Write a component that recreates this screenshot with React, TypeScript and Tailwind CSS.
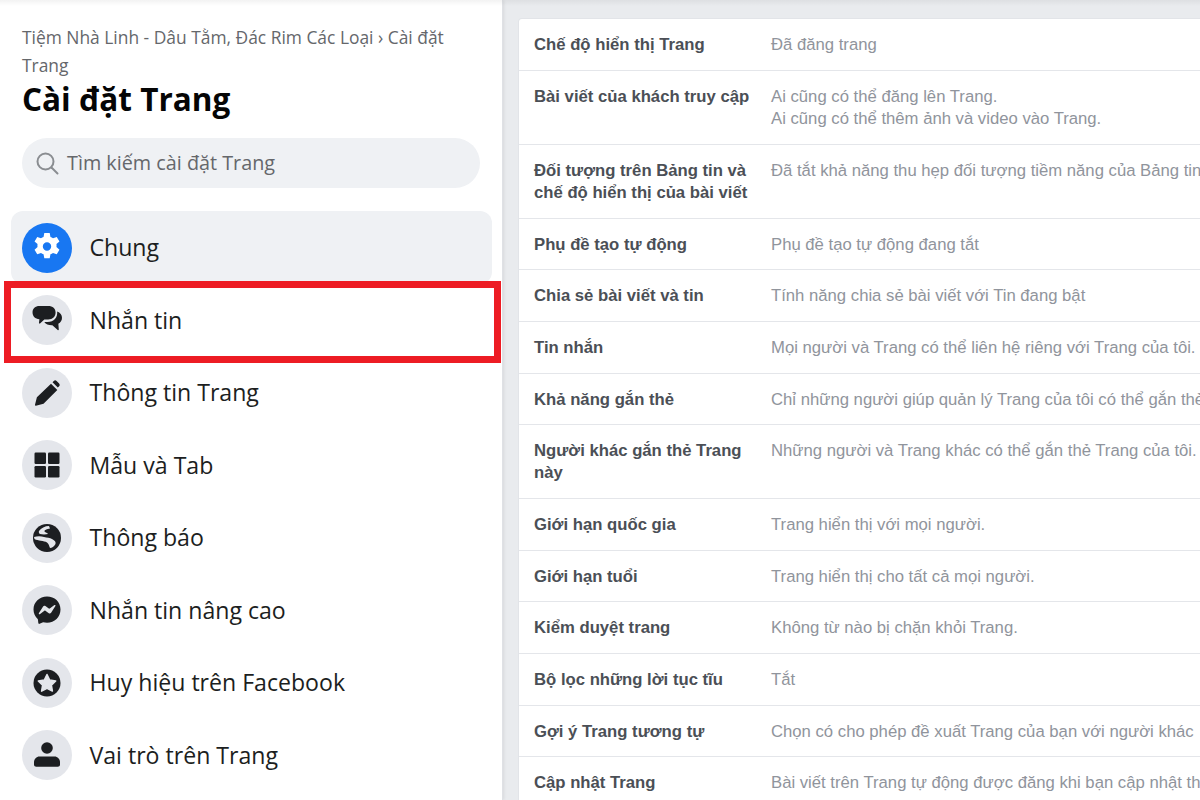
const rows: { label: string[]; value: string[] }[] = [
  { label: ["Chế độ hiển thị Trang"], value: ["Đã đăng trang"] },
  { label: ["Bài viết của khách truy cập"], value: ["Ai cũng có thể đăng lên Trang.", "Ai cũng có thể thêm ảnh và video vào Trang."] },
  { label: ["Đối tượng trên Bảng tin và", "chế độ hiển thị của bài viết"], value: ["Đã tắt khả năng thu hẹp đối tượng tiềm năng của Bảng tin"] },
  { label: ["Phụ đề tạo tự động"], value: ["Phụ đề tạo tự động đang tắt"] },
  { label: ["Chia sẻ bài viết và tin"], value: ["Tính năng chia sẻ bài viết với Tin đang bật"] },
  { label: ["Tin nhắn"], value: ["Mọi người và Trang có thể liên hệ riêng với Trang của tôi."] },
  { label: ["Khả năng gắn thẻ"], value: ["Chỉ những người giúp quản lý Trang của tôi có thể gắn thẻ"] },
  { label: ["Người khác gắn thẻ Trang", "này"], value: ["Những người và Trang khác có thể gắn thẻ Trang của tôi."] },
  { label: ["Giới hạn quốc gia"], value: ["Trang hiển thị với mọi người."] },
  { label: ["Giới hạn tuổi"], value: ["Trang hiển thị cho tất cả mọi người."] },
  { label: ["Kiểm duyệt trang"], value: ["Không từ nào bị chặn khỏi Trang."] },
  { label: ["Bộ lọc những lời tục tĩu"], value: ["Tắt"] },
  { label: ["Gợi ý Trang tương tự"], value: ["Chọn có cho phép đề xuất Trang của bạn với người khác"] },
  { label: ["Cập nhật Trang"], value: ["Bài viết trên Trang tự động được đăng khi bạn cập nhật thông"] },
];

const GearIcon = () => (
  <svg viewBox="2 3 20 20" className="h-[30px] w-[30px] fill-white">
    <path
      fillRule="evenodd"
      d="M10.200 2h3.600l.5 2.600c.6.2 1.200.5 1.700.9l2.500-.9 1.800 3.100-2 1.700c.1.7.1 1.300 0 2l2 1.700-1.800 3.100-2.500-.9c-.5.4-1.100.7-1.700.9l-.5 2.600h-3.600l-.5-2.600c-.6-.2-1.200-.5-1.700-.9l-2.500.9-1.800-3.100 2-1.700c-.1-.7-.1-1.300 0-2l-2-1.700 1.800-3.100 2.500.9c.5-.4 1.100-.7 1.700-.9zM12 8.200a2.800 2.800 0 1 0 0 5.600 2.800 2.800 0 0 0 0-5.600z"
      transform="translate(0 1)"
    />
  </svg>
);

const ChatIcon = () => (
  <svg viewBox="1 2 28 27" className="h-[30px] w-[30px] fill-[#1c1e21]">
    <path d="M8 2.500h8c4.500 0 7 2.400 7 6 0 3.800-2.600 6.500-7 6.500h-3.500l-4 3.700c-.5.400-1.100.1-1-.5l.4-3.300C4 14.400 1.500 12 1.500 8.500c0-3.600 2.500-6 6.500-6z" />
    <path d="M24.500 7.500c2.800 1 4.500 3.300 4.500 6 0 2.600-1.300 4.500-3.400 5.500l.4 5.300c0 .6-.6.900-1 .5l-5-4.500c-3.500.1-6-.8-7.500-3h3c6 0 9.500-4 9-9.800z" />
  </svg>
);

const PencilIcon = () => (
  <svg viewBox="0 0 30 30" className="h-[30px] w-[30px] fill-[#1c1e21]">
    <path d="M20.500 4.200l1.300-1.300c.8-.8 2-.8 2.800 0l2.500 2.500c.8.800.8 2 0 2.800l-1.300 1.300zM19 5.700l6.300 6.300-13.800 13.800-7.600 1.900c-.6.100-1-.3-.9-.9l1.900-7.600z" />
  </svg>
);

const GridIcon = () => (
  <svg viewBox="0 0 30 30" className="h-[30px] w-[30px] fill-[#1c1e21]">
    <rect x="2.500" y="2.500" width="11.500" height="11.500" rx="1.200" />
    <rect x="16" y="2.500" width="11.500" height="11.500" rx="1.200" />
    <rect x="2.500" y="16" width="11.500" height="11.500" rx="1.200" />
    <rect x="16" y="16" width="11.500" height="11.500" rx="1.200" />
  </svg>
);

const GlobeIcon = () => (
  <svg viewBox="0 0 30 30" className="h-[30px] w-[30px]">
    <circle cx="15" cy="15" r="14" className="fill-[#1c1e21]" />
    <path
      className="fill-[#e4e6eb]"
      d="M7 8c2-3 6-5 10-5l1 2.500c-3 .5-6 1.500-5.500 3 1 1.500 3 1 3.500 2.500-2 .5-6 .5-8 0-1-.5-1.500-2-1-3z"
    />
    <path
      className="fill-[#e4e6eb]"
      d="M2 14c3-1 7-1 10 0 3 1 6 .5 8 2 3 1.500 4 3 3.500 5-1.500 2.500-3.500 4-5.500 4-1-2-1-4-3-5.500-3-2-9-1.500-12.500-3.500z"
    />
  </svg>
);

const MessengerIcon = () => (
  <svg viewBox="0 0 30 30" className="h-[30px] w-[30px]">
    <path className="fill-[#1c1e21]" d="M15 1.500C7.400 1.500 1.500 7.100 1.500 14.500c0 3.900 1.600 7.200 4.200 9.500.5.400.4 3.500.7 4.300.2.500.7.700 1.200.5l3.500-1.500c1.200.3 2.500.5 3.900.5 7.600 0 13.500-5.600 13.500-13.300S22.600 1.500 15 1.500z" />
    <path className="fill-[#e4e6eb]" d="M6.800 18.300l4.300-6.800c.5-.8 1.600-1 2.300-.4l3.400 2.500c.3.200.7.200 1 0l4.600-3.500c.6-.5 1.400.3 1 .9l-4.300 6.800c-.5.800-1.600 1-2.300.4l-3.400-2.500c-.3-.2-.7-.2-1 0l-4.600 3.500c-.6.500-1.400-.3-.8-.9z" />
  </svg>
);

const BadgeIcon = () => (
  <svg viewBox="0 0 30 30" className="h-[30px] w-[30px]">
    <circle cx="15" cy="15" r="13.500" className="fill-[#1c1e21]" />
    <path className="fill-[#e4e6eb]" d="M15 6.500l2.700 5.500 6 .9-4.300 4.200 1 6-5.400-2.800-5.400 2.800 1-6-4.300-4.200 6-.9z" stroke="#e4e6eb" strokeWidth="1.500" strokeLinejoin="round" />
  </svg>
);

const PersonIcon = () => (
  <svg viewBox="0 0 30 30" className="h-[30px] w-[30px] fill-[#1c1e21]">
    <circle cx="15" cy="8" r="5.800" />
    <path d="M7.500 16.500h15c3 0 5.500 2.500 5.500 5.500v2.500c0 1.300-1 2.300-2.300 2.300H4.300c-1.300 0-2.300-1-2.300-2.300V22c0-3 2.500-5.500 5.500-5.500z" />
  </svg>
);

const navItems = [
  { label: "Chung", icon: <GearIcon />, active: true },
  { label: "Nhắn tin", icon: <ChatIcon /> },
  { label: "Thông tin Trang", icon: <PencilIcon /> },
  { label: "Mẫu và Tab", icon: <GridIcon /> },
  { label: "Thông báo", icon: <GlobeIcon /> },
  { label: "Nhắn tin nâng cao", icon: <MessengerIcon /> },
  { label: "Huy hiệu trên Facebook", icon: <BadgeIcon /> },
  { label: "Vai trò trên Trang", icon: <PersonIcon /> },
];

export default function App() {
  return (
    <div className="relative flex h-[800px] w-[1200px] overflow-hidden bg-[#e9ebee] font-['Open_Sans','Liberation_Sans',sans-serif]">
      {/* Sidebar */}
      <aside className="w-[503px] shrink-0 border-r border-[#dfe1e5] bg-white shadow-[1px_0_3px_rgba(0,0,0,0.08)]">
        <div className="px-[22px] pt-[23px]">
          <div className="w-[440px] text-[17.400px] leading-[28px] text-[#65676b]">
            Tiệm Nhà Linh - Dâu Tằm, Đác Rim Các Loại › Cài đặt Trang
          </div>
          <h1 className="mt-[-2px] text-[31.500px] leading-[44px] font-bold text-[#050505]">Cài đặt Trang</h1>
          <div className="mt-[17px] flex h-[50px] w-[458px] items-center gap-[8px] rounded-full bg-[#eff1f4] pl-[13px] text-[#65676b]">
            <svg viewBox="0 0 24 24" className="h-[24px] w-[24px] fill-none stroke-[#8a8d91] stroke-2">
              <circle cx="10.500" cy="10.500" r="8" />
              <path d="M16.500 16.500l6 6" strokeLinecap="round" />
            </svg>
            <span className="text-[19.800px]">Tìm kiếm cài đặt Trang</span>
          </div>
        </div>

        <nav className="mt-[23.400px] px-[11px]">
          {navItems.map((item) => (
            <div
              key={item.label}
              className={`flex h-[72.500px] w-[481px] items-center gap-[17.500px] rounded-xl px-[11px] ${
                item.active ? "bg-[#eff1f4]" : ""
              }`}
            >
              <div
                className={`flex h-[50px] w-[50px] shrink-0 items-center justify-center rounded-full ${
                  item.active ? "bg-[#1877f2]" : "bg-[#e4e6eb]"
                }`}
              >
                {item.icon}
              </div>
              <span className="text-[23.100px] text-[#1c1e21]">{item.label}</span>
            </div>
          ))}
        </nav>
      </aside>

      {/* Settings table */}
      <main className="pt-[19px] pl-[16px]">
        <div className="w-[900px] rounded-tl-[3px] bg-white font-['Liberation_Sans',sans-serif] shadow-[0_0_0_1px_#e2e4e8]">
          {rows.map((row) => (
            <div
              key={row.label[0]}
              className={`flex border-b border-[#e4e6ea] pt-[15px] pl-[15px] text-[16.700px] leading-[22px] ${
                row.label.length > 1 || row.value.length > 1 ? "h-[74px]" : "h-[51.650px]"
              }`}
            >
              <div className="w-[237px] shrink-0 font-bold whitespace-nowrap text-[#4b4f56]">
                {row.label.map((line) => (
                  <div key={line}>{line}</div>
                ))}
              </div>
              <div className="whitespace-nowrap text-[#90949c]">
                {row.value.map((line) => (
                  <div key={line}>{line}</div>
                ))}
              </div>
            </div>
          ))}
        </div>
      </main>

      {/* Top edge shadow */}
      <div className="pointer-events-none absolute inset-x-0 top-0 h-[6px] bg-gradient-to-b from-black/5 to-transparent" />

      {/* Red highlight */}
      <div className="pointer-events-none absolute top-[281px] left-[4px] h-[82px] w-[497px] border-[7px] border-[#ed1c24]" />
    </div>
  );
}
